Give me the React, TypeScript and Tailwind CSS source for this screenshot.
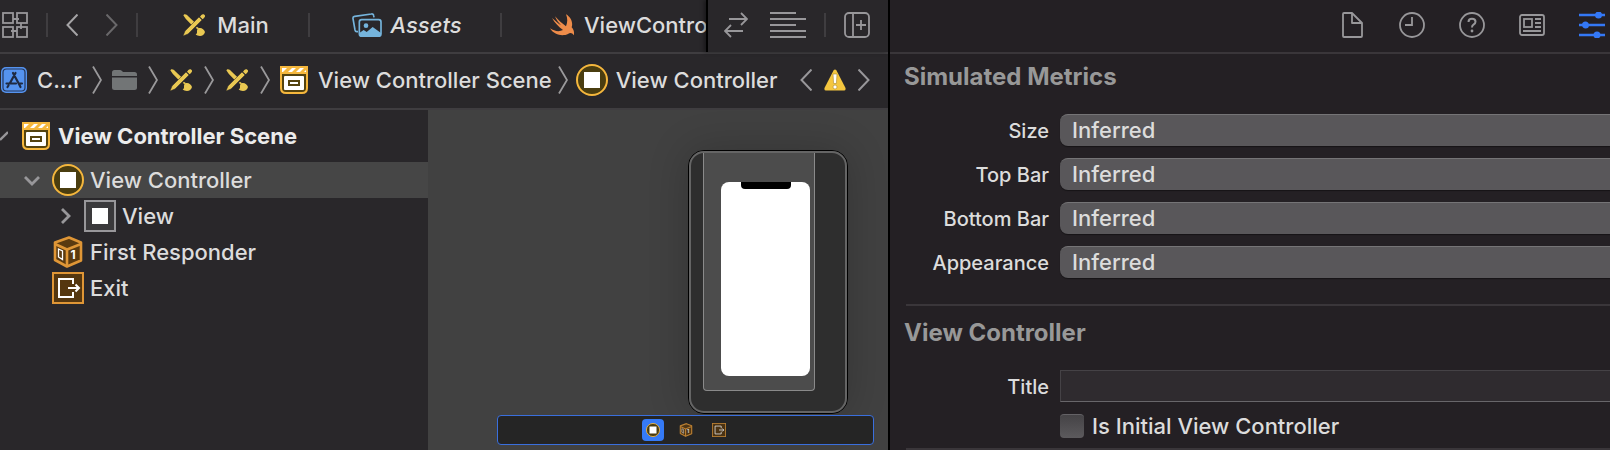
import { useState } from 'react';
import type { ReactNode } from 'react';

interface IconProps {
  className?: string;
}

function InterfaceIcon() {
  return (
    <svg width="22" height="22" viewBox="0 0 66 66" className="shrink-0" fill="#e9c852">
      <path d="M1 4 L4 1 C9 0 12 3 15 6 L37 27 L29 36 L8 14 Z" />
      <path d="M0 66 L6 51 L48 9 L57 18 L15 60 Z" stroke="#29272a" strokeWidth="1.500" />
      <path d="M51 8 L55 3 C59 -1 65 1 66 5 C67 9 64 11 59 16 Z" />
      <path d="M42 38 L48 43 L45 46 L38 42 Z" />
      <path d="M47 43 C54 40 64 46 66 54 C64 62 58 66 51 66 C45 66 41 64 38 61 C43 59 42 56 42 52 C42 47 44 44 47 43 Z" />
    </svg>
  );
}

function AssetsIcon() {
  return (
    <svg width="30" height="24" viewBox="0 0 90 72" className="shrink-0" fill="none" stroke="#75b4dc" strokeWidth="5">
      <path d="M18 56 L14 56 Q10 56 9 51 L3 17 Q2 11 8 10 L58 3 Q64 2 65 8 L66 13" />
      <rect x="22" y="20" width="65" height="50" rx="7" />
      <circle cx="42" cy="38" r="7" fill="#75b4dc" stroke="none" />
      <path d="M22 60 L35 51 L44 57 L62 42 L87 60 L87 68 L80 71 L28 71 L22 68 Z" fill="#75b4dc" stroke="none" />
    </svg>
  );
}

function SwiftIcon() {
  return (
    <svg width="24" height="22" viewBox="0 0 72 66" className="shrink-0" fill="#ee8c4a">
      <path d="M48 1 C62 9 70 25 65 40 C71 46 74 56 71 64 C67 56 60 56 54 60 C40 67 13 65 0 43 C13 52 28 54 39 48 C26 39 14 26 6 12 C14 19 24 28 33 34 C26 27 19 17 15 7 C25 18 37 29 48 37 C53 26 53 12 48 1 Z" />
    </svg>
  );
}

function SceneIcon() {
  return (
    <svg width="28" height="28" viewBox="0 0 28 28" className="shrink-0">
      <path d="M0 0 H28 V22 Q28 28 22 28 H6 Q0 28 0 22 Z" fill="#f5b73d" />
      <path d="M2 8 H26 V22 Q26 26 22 26 H6 Q2 26 2 22 Z" fill="#54430f" />
      <path d="M3 6 L7 2 H2 V6 Z M8 6 L12 2 H16 L12 6 Z M16 6 L20 2 H24 L20 6 Z M24 6 L26 4 V6 Z" fill="#fff" />
      <rect x="4" y="10" width="20" height="14" rx="1" fill="#fff" />
      <rect x="9" y="15" width="10" height="4" fill="#fff" stroke="#54430f" strokeWidth="2" />
    </svg>
  );
}

function ControllerIcon({ className = 'size-8' }: IconProps) {
  return (
    <svg viewBox="0 0 32 32" className={`shrink-0 ${className}`}>
      <circle cx="16" cy="16" r="15" fill="#4a3d10" stroke="#f5b73d" strokeWidth="2" />
      <rect x="8" y="8" width="16" height="16" fill="#fff" />
    </svg>
  );
}

function ViewIcon() {
  return (
    <svg width="32" height="32" viewBox="0 0 32 32" className="shrink-0">
      <rect x="1" y="1" width="30" height="30" fill="#3a393b" stroke="#98979a" strokeWidth="2" />
      <rect x="8" y="8" width="16" height="16" fill="#fff" />
    </svg>
  );
}

function ResponderIcon({ className = 'size-8' }: IconProps) {
  return (
    <svg viewBox="0 0 32 32" className={`shrink-0 ${className}`}>
      <path d="M17 1.500 L29 6.500 V24.500 L15 30.500 L3 24 V6.500 Z" fill="#5a3a10" stroke="#df9636" strokeWidth="2.600" strokeLinejoin="round" />
      <path d="M3 8 L15 13.500 L29 8 M15 13.500 V30" fill="none" stroke="#df9636" strokeWidth="2.600" />
      <path d="M6.500 13 L10.500 15 V23.500 L6.500 21 Z" fill="none" stroke="#fff" strokeWidth="1.300" />
      <text x="18.500" y="23" fill="#fff" fontSize="12" fontWeight="700" fontFamily="Inter, sans-serif">1</text>
    </svg>
  );
}

function ExitIcon({ className = 'size-8' }: IconProps) {
  return (
    <svg viewBox="0 0 32 32" className={`shrink-0 ${className}`} fill="none">
      <rect x="1" y="1" width="30" height="30" fill="#55370f" stroke="#df9636" strokeWidth="2" />
      <path d="M21 12 V7 H7 V25 H21 V20" stroke="#fff" strokeWidth="2" />
      <path d="M16 16 H27 M23.500 12.500 L27 16 L23.500 19.500" stroke="#fff" strokeWidth="2" />
    </svg>
  );
}

function Chevron({ d, className }: { d: string; className: string }) {
  return (
    <svg viewBox="0 0 12 22" className={`h-[22px] w-3 ${className}`} fill="none" stroke="currentColor" strokeWidth="2">
      <path d={d} />
    </svg>
  );
}

const LEFT = 'M11.5 0.5 L1.500 11 L11.500 21.500';
const RIGHT = 'M0.5 0.5 L10.500 11 L0.500 21.500';

function PathSeparator() {
  return (
    <svg width="10" height="28" viewBox="0 0 10 28" className="shrink-0" fill="none" stroke="#9a999b" strokeWidth="1.800">
      <path d="M1 0.500 L9 14 L1 27.500" />
    </svg>
  );
}

function Divider() {
  return <span className="h-6 w-0.5 shrink-0 bg-[#3f3d40]" />;
}

function IconButton({ label, children }: { label: string; children: ReactNode }) {
  return (
    <button type="button" aria-label={label} className="flex shrink-0 items-center justify-center">
      {children}
    </button>
  );
}

function TabBar() {
  return (
    <div className="flex h-[54px] border-b-2 border-[#3f3d40]">
      <div className="flex min-w-0 flex-1 items-center overflow-hidden pb-0.5 pl-0.5">
        <IconButton label="Related items">
          <svg width="26" height="26" viewBox="0 0 26 26" fill="none" stroke="#98979a" strokeWidth="1.800">
            <rect x="1" y="1" width="10" height="10" />
            <rect x="15" y="1" width="10" height="10" />
            <rect x="1" y="15" width="10" height="10" />
            <rect x="15" y="15" width="10" height="10" />
            <path d="M11 7 H17 M19 11 V17 M9 19 H15" />
          </svg>
        </IconButton>
        <div className="ml-[18px] flex items-center">
          <Divider />
          <div className="flex w-[88px] items-center justify-between px-[18px]">
            <IconButton label="Back">
              <Chevron d={LEFT} className="text-[#a5a4a6]" />
            </IconButton>
            <IconButton label="Forward">
              <Chevron d={RIGHT} className="text-[#69686a]" />
            </IconButton>
          </div>
          <Divider />
        </div>
        <button type="button" className="flex w-[170px] shrink-0 items-center justify-center gap-3 pl-1.5">
          <InterfaceIcon />
          Main
        </button>
        <Divider />
        <button type="button" className="flex w-[190px] shrink-0 items-center justify-center gap-2 pl-5 pr-4 italic">
          <AssetsIcon />
          Assets
        </button>
        <Divider />
        <button type="button" className="ml-12 flex shrink-0 items-center gap-2.5">
          <SwiftIcon />
          ViewContro
        </button>
      </div>
      <div className="flex shrink-0 items-center border-l-2 border-black pb-0.5 pl-4 pr-[18px] shadow-[-2px_0_4px_rgba(0,0,0,0.4)]">
        <IconButton label="Code review">
          <svg width="24" height="26" viewBox="0 0 24 26" fill="none" stroke="#98979a" strokeWidth="1.800">
            <path d="M5 7 H23 M17 1 L23 7 L17 13 M19 19 H1 M7 13 L1 19 L7 25" />
          </svg>
        </IconButton>
        <span className="w-[22px]" />
        <IconButton label="Editor options">
          <svg width="36" height="26" viewBox="0 0 36 26" stroke="#98979a" strokeWidth="2">
            <path d="M0 1 H26 M0 7 H36 M0 13 H26 M0 19 H36 M0 25 H36" />
          </svg>
        </IconButton>
        <span className="w-[18px]" />
        <Divider />
        <span className="w-[18px]" />
        <IconButton label="Add editor">
          <svg width="26" height="26" viewBox="0 0 26 26" fill="none" stroke="#98979a" strokeWidth="1.800">
            <rect x="1" y="1" width="24" height="24" rx="4" />
            <path d="M9 1 V25 M12 13 H22 M17 8 V18" />
          </svg>
        </IconButton>
      </div>
    </div>
  );
}

function JumpBar() {
  return (
    <div className="flex h-14 items-center border-b-2 border-[#3f3d40] pb-0.5 pl-px pr-[18px]">
      <nav aria-label="Jump bar" className="flex items-center whitespace-nowrap">
        <svg width="26" height="26" viewBox="0 0 26 26" className="shrink-0">
          <rect width="26" height="26" rx="5" fill="#5593ef" />
          <rect x="2" y="2" width="22" height="22" rx="3.500" fill="none" stroke="#26385c" strokeWidth="1.200" />
          <g stroke="#1f2a41" strokeWidth="2.200" strokeLinecap="round">
            <path d="M14.500 6 L9 16 M12 6 L18.500 18 L19.500 20 M5.500 16.500 H15 M19 16.500 H21 M7.500 18.500 L6.500 20" />
          </g>
        </svg>
        <a href="#project" className="ml-2.5 w-[55px]">C...r</a>
        <PathSeparator />
        <svg width="26" height="20" viewBox="0 0 26 20" className="mx-2.5 shrink-0" fill="#727576">
          <path d="M0 6 V2.500 Q0 0 2.500 0 H8 Q9 0 10 1 L11 2 H22.500 Q25 2 25 4.500 V6 Z" />
          <path d="M0 7.500 H25 V17.500 Q25 20 22.500 20 H2.500 Q0 20 0 17.500 Z" />
        </svg>
        <PathSeparator />
        <a href="#main" aria-label="Main.storyboard" className="mx-3"><InterfaceIcon /></a>
        <PathSeparator />
        <a href="#base" aria-label="Base" className="mx-3"><InterfaceIcon /></a>
        <PathSeparator />
        <a href="#scene" className="ml-2.5 mr-1.5 flex items-center gap-2.5">
          <SceneIcon />
          View Controller Scene
        </a>
        <PathSeparator />
        <a href="#controller" className="ml-2 flex items-center gap-2">
          <ControllerIcon />
          View Controller
        </a>
      </nav>
      <div className="ml-auto flex items-center gap-3">
        <IconButton label="Previous issue">
          <Chevron d={LEFT} className="text-[#98979a]" />
        </IconButton>
        <svg width="22" height="22" viewBox="0 0 22 22" className="shrink-0">
          <path d="M9.500 1.500 Q11 -0.500 12.500 1.500 L21.500 19 Q22 21.500 20 21.500 H2 Q0 21.500 0.500 19 Z" fill="#f4c63f" />
          <path d="M9 5 H13 L12.400 14.500 H9.600 Z" fill="#fff" stroke="#ad8a2a" strokeWidth="0.600" />
          <circle cx="11" cy="18" r="2" fill="#fff" stroke="#ad8a2a" strokeWidth="0.600" />
        </svg>
        <IconButton label="Next issue">
          <Chevron d={RIGHT} className="text-[#98979a]" />
        </IconButton>
      </div>
    </div>
  );
}

function Outline() {
  const [selected, setSelected] = useState('View Controller');

  const items = [
    { name: 'View Controller', indent: 'pl-[23px]', arrow: 'M2 6 L9 13 L16 6', icon: <ControllerIcon /> },
    { name: 'View', indent: 'pl-[55px]', arrow: 'M7 2 L14 9 L7 16', icon: <ViewIcon /> },
    { name: 'First Responder', indent: 'pl-[23px]', arrow: '', icon: <ResponderIcon /> },
    { name: 'Exit', indent: 'pl-[23px]', arrow: '', icon: <ExitIcon /> },
  ];

  return (
    <aside className="w-[428px] shrink-0 bg-[#29272a]">
      <h2 className="flex h-[52px] items-center font-bold text-[#ececec]">
        <svg width="8" height="10" viewBox="0 0 8 10" className="mr-3.5 shrink-0" fill="none" stroke="#98979a" strokeWidth="2.400">
          <path d="M0 9 L8 1" />
        </svg>
        <SceneIcon />
        <span className="ml-2">View Controller Scene</span>
      </h2>
      <ul>
        {items.map((item) => (
          <li key={item.name}>
            <button
              type="button"
              onClick={() => setSelected(item.name)}
              className={`flex h-9 w-full items-center ${item.indent} ${selected === item.name ? 'bg-[#464646]' : ''}`}
            >
              <svg width="18" height="18" viewBox="0 0 18 18" className="mr-[11px] shrink-0" fill="none" stroke="#98979a" strokeWidth="2.800">
                <path d={item.arrow} />
              </svg>
              {item.icon}
              <span className="ml-1.5">{item.name}</span>
            </button>
          </li>
        ))}
      </ul>
    </aside>
  );
}

function Canvas() {
  return (
    <main className="flex min-w-0 flex-1 flex-col items-end bg-[#414141] pb-1.5 pl-[69px] pr-[14px] pt-10">
      <div className="mr-[26px] h-[264px] w-40 rounded-2xl border border-black bg-[#2e2e2e] shadow-[0_0_40px_rgba(0,0,0,0.2)]">
        <div className="h-full rounded-[15px] border-2 border-[#656565] pl-3">
          <div className="h-[238px] w-28 rounded-b border-x border-b border-[#8a8a8a] bg-[#4c4c4c] pl-[17px] pt-[29px]">
            <div className="flex h-[194px] w-[89px] justify-center rounded-lg bg-white">
              <div className="h-[7px] w-[50px] rounded-b bg-black" />
            </div>
          </div>
        </div>
      </div>
      <div className="mt-px flex h-[30px] w-full items-center justify-center gap-[11px] rounded border border-[#3a6fdd] bg-[#252525]">
        <button type="button" aria-label="View Controller" className="flex size-[22px] items-center justify-center rounded bg-[#357af6]">
          <ControllerIcon className="size-3.5" />
        </button>
        <button type="button" aria-label="First Responder" className="flex size-[22px] items-center justify-center opacity-80">
          <ResponderIcon className="size-3.5" />
        </button>
        <button type="button" aria-label="Exit" className="flex size-[22px] items-center justify-center opacity-80">
          <ExitIcon className="size-3.5" />
        </button>
      </div>
    </main>
  );
}

function InspectorTabs() {
  return (
    <div className="flex h-[54px] items-center justify-end gap-[34px] border-b-2 border-[#3a363a] pb-0.5 pr-[5px]">
      <IconButton label="File inspector">
        <svg width="26" height="26" viewBox="0 0 26 26" fill="none" stroke="#98979a" strokeWidth="1.800" strokeLinejoin="round">
          <path d="M13 1 H5 Q4 1 4 2 V24 Q4 25 5 25 H22 Q23 25 23 24 V11 Z V11 H23" />
        </svg>
      </IconButton>
      <IconButton label="History inspector">
        <svg width="26" height="26" viewBox="0 0 26 26" fill="none" stroke="#98979a" strokeWidth="1.800">
          <circle cx="13" cy="13" r="12" />
          <path d="M13 5 V13 H6" />
        </svg>
      </IconButton>
      <IconButton label="Quick help">
        <svg width="26" height="26" viewBox="0 0 26 26" fill="none" stroke="#98979a" strokeWidth="1.800">
          <circle cx="13" cy="13" r="12" />
          <path d="M9.500 10 Q9.500 6.800 13 6.800 Q16.500 6.800 16.500 9.800 Q16.500 11.500 14.500 12.700 Q13 13.600 13 15.500" strokeWidth="2" />
          <circle cx="13" cy="19" r="1.400" fill="#98979a" stroke="none" />
        </svg>
      </IconButton>
      <IconButton label="Identity inspector">
        <svg width="26" height="26" viewBox="0 0 26 26" fill="none" stroke="#98979a" strokeWidth="1.800">
          <rect x="1" y="3" width="24" height="20" rx="2" />
          <rect x="5" y="7" width="8" height="8" />
          <path d="M16 7 H22 M16 11 H22 M16 15 H22 M4 19 H22" />
        </svg>
      </IconButton>
      <IconButton label="Attributes inspector">
        <svg width="26" height="26" viewBox="0 0 26 26" fill="#3478f6" stroke="#3478f6" strokeWidth="2.400">
          <path d="M0 3 H26 M0 13 H26 M0 23 H26" />
          <circle cx="19.500" cy="3" r="2.300" />
          <circle cx="6.500" cy="13" r="2.300" />
          <circle cx="18" cy="23" r="2.300" />
        </svg>
      </IconButton>
    </div>
  );
}

function Inspector() {
  const [title, setTitle] = useState('');
  const [isInitial, setIsInitial] = useState(false);

  const metrics = [
    { id: 'size', label: 'Size' },
    { id: 'top-bar', label: 'Top Bar' },
    { id: 'bottom-bar', label: 'Bottom Bar' },
    { id: 'appearance', label: 'Appearance' },
  ];

  return (
    <section className="min-w-0 bg-[#242024]">
      <InspectorTabs />
      <div className="pl-[14px]">
        <h3 className="h-[60px] pt-2 text-2xl font-bold leading-[30px] text-[#989898]">Simulated Metrics</h3>
        <div className="flex flex-col gap-3 pb-[26px]">
          {metrics.map((metric) => (
            <div key={metric.id} className="flex h-8 items-center gap-[11px]">
              <label htmlFor={metric.id} className="w-[145px] shrink-0 pt-px text-right text-[20px]">{metric.label}</label>
              <select
                id={metric.id}
                className="h-8 min-w-0 flex-1 appearance-none rounded-l-lg border-t border-[#757476] bg-[#59575a] pb-0.5 pl-3 leading-7 shadow-[0_1px_1px_rgba(0,0,0,0.4)]"
              >
                <option>Inferred</option>
              </select>
            </div>
          ))}
        </div>
        <hr className="ml-0.5 border-t-2 border-[#3a363a]" />
        <h3 className="h-16 pt-3 text-2xl font-bold leading-[30px] text-[#989898]">View Controller</h3>
        <div className="flex h-8 items-center gap-[11px]">
          <label htmlFor="title" className="w-[145px] shrink-0 pt-px text-right text-[20px]">Title</label>
          <input
            id="title"
            type="text"
            value={title}
            onChange={(e) => setTitle(e.target.value)}
            className="h-8 min-w-0 flex-1 border border-r-0 border-[#454246] border-b-[#68666a] bg-[#2f2b2f] px-2 outline-none"
          />
        </div>
        <div className="flex h-[46px] items-center gap-2 pl-[156px] pt-0.5">
          <input
            id="is-initial"
            type="checkbox"
            checked={isInitial}
            onChange={(e) => setIsInitial(e.target.checked)}
            className="size-6 shrink-0 appearance-none rounded border-t border-[#646266] bg-linear-to-b from-[#454346] to-[#5c5a5d] checked:from-[#3478f6] checked:to-[#3478f6]"
          />
          <label htmlFor="is-initial">Is Initial View Controller</label>
        </div>
        <hr className="ml-0.5 border-t-2 border-[#3a363a]" />
      </div>
    </section>
  );
}

export default function App() {
  return (
    <div className="grid min-h-screen grid-cols-[89fr_72fr] overflow-hidden bg-[#242024] font-['Inter',sans-serif] text-[22px] font-medium leading-8 text-[#dcdcdc]">
      <div className="flex min-w-0 flex-col border-r-2 border-black bg-[#29272a]">
        <TabBar />
        <JumpBar />
        <div className="flex flex-1">
          <Outline />
          <Canvas />
        </div>
      </div>
      <Inspector />
    </div>
  );
}
